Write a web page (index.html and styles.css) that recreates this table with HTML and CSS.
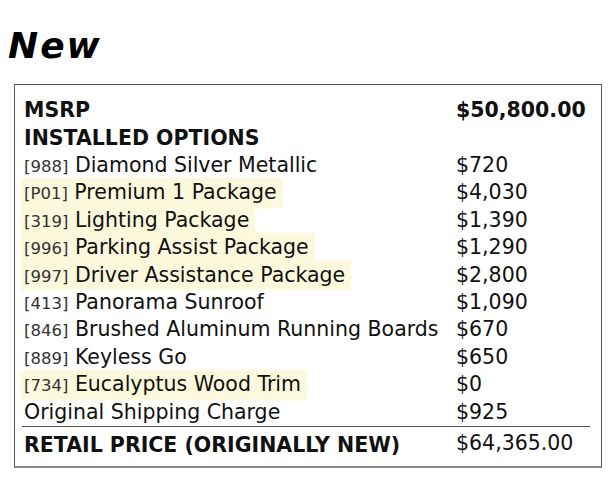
FILE: index.html
```html
<!DOCTYPE html>
<html>
<head>
<meta charset="utf-8">
<link rel="stylesheet" href="styles.css">
</head>
<body>
<div class="page">
  <h1 class="title">New</h1>
  <div class="box">
    <table class="price">
      <tr class="head"><td class="label"><span class="txt">MSRP</span></td><td class="val">$50,800.00</td></tr>
      <tr class="head"><td class="label"><span class="txt">INSTALLED OPTIONS</span></td><td class="val"></td></tr>
      <tr><td class="label"><span class="txt"><span class="code">[988]</span> Diamond Silver Metallic</span></td><td class="val">$720</td></tr>
      <tr><td class="label"><span class="txt hl"><span class="code">[P01]</span> Premium 1 Package</span></td><td class="val">$4,030</td></tr>
      <tr><td class="label"><span class="txt hl"><span class="code">[319]</span> Lighting Package</span></td><td class="val">$1,390</td></tr>
      <tr><td class="label"><span class="txt hl"><span class="code">[996]</span> Parking Assist Package</span></td><td class="val">$1,290</td></tr>
      <tr><td class="label"><span class="txt hl"><span class="code">[997]</span> Driver Assistance Package</span></td><td class="val">$2,800</td></tr>
      <tr><td class="label"><span class="txt"><span class="code">[413]</span> Panorama Sunroof</span></td><td class="val">$1,090</td></tr>
      <tr><td class="label"><span class="txt"><span class="code">[846]</span> Brushed Aluminum Running Boards</span></td><td class="val">$670</td></tr>
      <tr><td class="label"><span class="txt"><span class="code">[889]</span> Keyless Go</span></td><td class="val">$650</td></tr>
      <tr><td class="label"><span class="txt hl"><span class="code">[734]</span> Eucalyptus Wood Trim</span></td><td class="val">$0</td></tr>
      <tr><td class="label"><span class="txt">Original Shipping Charge</span></td><td class="val">$925</td></tr>
      <tr class="total"><td class="label"><span class="txt">RETAIL PRICE (ORIGINALLY NEW)</span></td><td class="val">$64,365.00</td></tr>
    </table>
  </div>
</div>
</body>
</html>
```

FILE: styles.css
```css
html, body {
  margin: 0;
  padding: 0;
  background: #ffffff;
}
.page {
  padding: 24.6px 8px 0 8px;
  font-family: "DejaVu Sans", Verdana, sans-serif;
  color: #111;
}
.title {
  margin: 0 0 18.5px 0;
  font-size: 36px;
  letter-spacing: 2px;
  font-weight: bold;
  font-style: italic;
  line-height: normal;
  color: #000;
}
.box {
  margin-left: 6px;
  width: 588px;
  box-sizing: border-box;
  border: 1px solid #555;
  border-bottom: 2px solid #888;
  padding: 12px 0 7px 7px;
}
.price {
  border-collapse: collapse;
  font-size: 20.5px;
  line-height: 23.4px;
}
.price td {
  padding: 0;
  vertical-align: top;
}
.label {
  width: 432px;
}
.txt {
  display: inline-block;
  vertical-align: top;
  padding: 2px 5px 2px 2px;
}
.hl {
  background: #fcf8dc;
  box-shadow: 0 0 3px 1px #fcf8dc;
}
.code {
  font-size: 16.5px;
  line-height: 1;
  color: #333;
}
.val {
  width: 134px;
  padding: 2px 0 2px 2px !important;
  white-space: nowrap;
}
.head td {
  font-weight: bold;
}
.total td {
  border-top: 1px solid #555;
  padding-top: 5px !important;
}
.total .txt {
  font-weight: bold;
}
```
